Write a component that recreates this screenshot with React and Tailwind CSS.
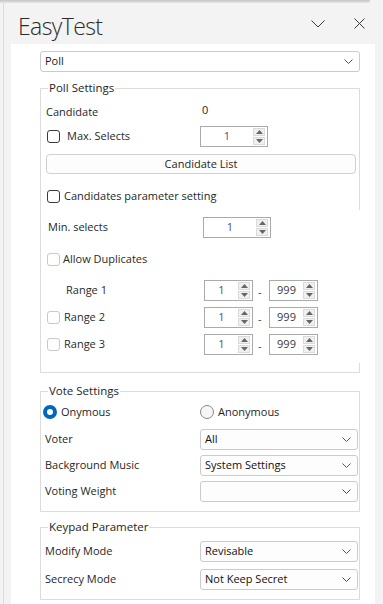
import React from "react";

const Chevron = ({ className = "" }) => (
  <svg width="9" height="5" viewBox="0 0 9 5" className={className} fill="none">
    <path d="M0.5 0.5 L4.5 4.5 L8.5 0.5" stroke="#555" strokeWidth="1" />
  </svg>
);

const Check = ({ disabled }) => (
  <span
    className={`block w-[13px] h-[13px] shrink-0 rounded-[3px] border bg-white ${
      disabled ? "border-[#c9c9c9]" : "border-[#3a3a3a]"
    }`}
  />
);

const Select = ({ value }) => (
  <div className="w-[158px] h-[21px] flex items-center justify-between pl-[4px] pr-[6px] border border-[#cbcbcb] rounded-[3px] bg-[#fdfdfd] text-[11px] text-[#111]">
    <span>{value}</span>
    <Chevron />
  </div>
);

const Arrow = ({ up }) => (
  <svg width="7" height="4" viewBox="0 0 7 4">
    <path d={up ? "M0 4 L3.5 0 L7 4 Z" : "M0 0 L3.5 4 L7 0 Z"} fill="#666" />
  </svg>
);

const Spin = ({ value, wide, color = "text-[#4b4f86]" }) => (
  <div
    className={`h-[21px] flex items-stretch border border-[#aaaaaa] bg-white ${
      wide ? "w-[68px]" : "w-[49px]"
    }`}
  >
    <div className={`flex-1 flex items-center justify-center text-[11px] ${color}`}>{value}</div>
    <div className="w-[12px] my-[1px] mr-[2px] flex flex-col gap-px">
      <div className="flex-1 flex items-center justify-center bg-[#f0f0f0] border border-[#dadada]">
        <Arrow up />
      </div>
      <div className="flex-1 flex items-center justify-center bg-[#f0f0f0] border border-[#dadada]">
        <Arrow />
      </div>
    </div>
  </div>
);

const Group = ({ title, className = "", children }) => (
  <fieldset className={`border border-[#dcdcdc] ${className}`}>
    <legend className="ml-[7px] px-[1px] text-[11.5px] leading-[16px] text-[#1e1e1e]">{title}</legend>
    {children}
  </fieldset>
);

const SelectRow = ({ label, value, className = "" }) => (
  <div className={`flex items-center h-[21px] ${className}`}>
    <div className="w-[159px] pl-[4px] text-[11px] text-[#1f1f1f]">{label}</div>
    <Select value={value} />
  </div>
);

const RangeRow = ({ label, check, className = "" }) => (
  <div className={`flex items-center h-[21px] ${className}`}>
    <div className={`w-[163px] flex items-center text-[11px] text-[#2a2a2a] ${check ? "pl-[6px] gap-[4px]" : "pl-[25px]"}`}>
      {check && <Check disabled />}
      <span>{label}</span>
    </div>
    <Spin value="1" />
    <div className="w-[16px] pl-[5px] pt-[4px] text-[11px] text-[#444]">-</div>
    <Spin value="999" color="text-[#3a3a3a]" />
  </div>
);

export default function App() {
  return (
    <div className="w-[383px] h-[604px] bg-[#f3f3f3] overflow-hidden flex flex-col font-['Open_Sans',sans-serif] text-[#1f1f1f]">
      <div className="h-[3px] w-[370px] shrink-0 bg-gradient-to-b from-[#c4c4c4] to-[#e6e6e6] rounded-br-[2px]" />
      <div className="flex-1 flex flex-col ml-[3px] border-l border-[#dcdcdc]">
        <div className="h-[41px] shrink-0 flex items-start pr-[18px]">
          <div className="pl-[14px] pt-[7px] text-[23px] leading-[32px] font-light tracking-[-0.6px] text-[#2b2b2b]">
            EasyTest
          </div>
          <div className="flex-1" />
          <svg width="14" height="8" viewBox="0 0 14 8" className="mt-[17px]" fill="none">
            <path d="M0.5 0.5 L7 7 L13.5 0.5" stroke="#3a3a3a" strokeWidth="1" />
          </svg>
          <svg width="11" height="11" viewBox="0 0 11 11" className="mt-[15px] ml-[29px]" fill="none">
            <path d="M0.5 0.5 L10.5 10.5 M10.5 0.5 L0.5 10.5" stroke="#3a3a3a" strokeWidth="1" />
          </svg>
        </div>

        <div className="flex-1 ml-[7px] w-[364px] bg-white pl-[29px] pr-[15px] pt-[7px]">
          <div className="h-[21px] flex items-center justify-between pl-[4px] pr-[6px] border border-[#cbcbcb] rounded-[3px] bg-white text-[11px] font-medium text-[#1a1a1a]">
            <span>Poll</span>
            <Chevron />
          </div>

          <Group title="Poll Settings" className="mt-[8px] pb-[9px]">
            <div className="mt-[6px] h-[20px] flex items-center text-[11px]">
              <div className="w-[161px] pl-[5px]">Candidate</div>
              <span className="-mt-[3px]">0</span>
            </div>
            <div className="mt-[4px] h-[21px] flex items-center">
              <div className="w-[159px] pl-[6px] flex items-center gap-[7px] text-[11px]">
                <Check />
                <span>Max. Selects</span>
              </div>
              <Spin value="1" wide />
            </div>
            <div className="mt-[7px] ml-[5px] w-[310px] h-[20px] flex items-center justify-center border border-[#d0d0d0] rounded-[4px] bg-[#fdfdfd] text-[11px]">
              Candidate List
            </div>
            <div className="mt-[12px] h-[20px] pl-[6px] flex items-center gap-[4px] text-[11px]">
              <Check />
              <span>Candidates parameter setting</span>
            </div>
            <div className="mt-[4px] -mr-[1px] pt-[7px] pb-[8px] bg-white">
              <div className="h-[21px] flex items-center">
                <div className="w-[162px] pl-[7px] text-[11px]">Min. selects</div>
                <Spin value="1" wide />
              </div>
              <div className="mt-[11px] h-[20px] pl-[6px] flex items-center gap-[3px] text-[11px] text-[#2a2a2a]">
                <Check disabled />
                <span>Allow Duplicates</span>
              </div>
              <RangeRow label="Range 1" className="mt-[11px]" />
              <RangeRow label="Range 2" check className="mt-[6px]" />
              <RangeRow label="Range 3" check className="mt-[6px]" />
            </div>
          </Group>

          <Group title="Vote Settings" className="mt-[10px] pb-[9px]">
            <div className="mt-[3px] h-[20px] flex items-center text-[11px]">
              <div className="w-[159px] pl-[2px] flex items-center gap-[4px]">
                <span className="w-[14px] h-[14px] rounded-full bg-[#0067c0] flex items-center justify-center">
                  <span className="w-[6px] h-[6px] rounded-full bg-white" />
                </span>
                <span>Onymous</span>
              </div>
              <div className="flex items-center gap-[4px]">
                <span className="w-[14px] h-[14px] rounded-full border border-[#8a8a8a] bg-[#f6f6f6]" />
                <span>Anonymous</span>
              </div>
            </div>
            <SelectRow label="Voter" value="All" className="mt-[7px]" />
            <SelectRow label="Background Music" value="System Settings" className="mt-[5px]" />
            <SelectRow label="Voting Weight" value="" className="mt-[5px]" />
          </Group>

          <Group title="Keypad Parameter" className="mt-[7px] pb-[9px]">
            <SelectRow label="Modify Mode" value="Revisable" className="mt-[6px]" />
            <SelectRow label="Secrecy Mode" value="Not Keep Secret" className="mt-[7px]" />
          </Group>
        </div>
      </div>
    </div>
  );
}
